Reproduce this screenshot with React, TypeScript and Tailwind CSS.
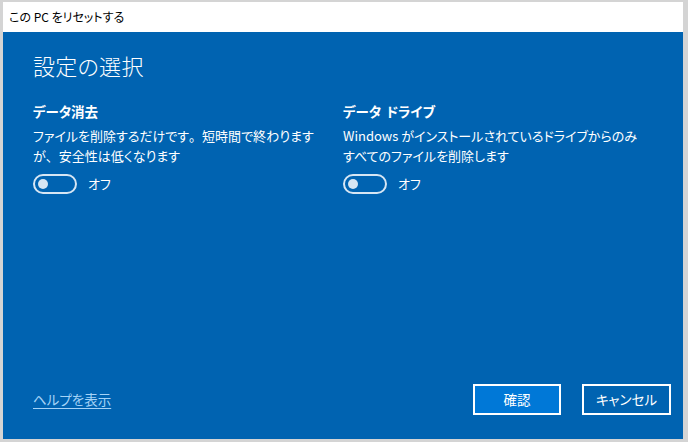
import React, { useState } from 'react';

const font = "[font-family:'Noto_Sans_CJK_JP','Noto_Sans',sans-serif] [font-feature-settings:'palt']";

interface ToggleProps {
  on: boolean;
  onChange: (v: boolean) => void;
}

const Toggle: React.FC<ToggleProps> = ({ on, onChange }) => (
  <div className="flex items-center gap-[11px]">
    <button
      onClick={() => onChange(!on)}
      className="flex h-[20px] w-[44px] items-center rounded-full border-2 border-[#d6e6f4] px-[3px]"
    >
      <span
        className={`block h-[10px] w-[10px] rounded-full bg-[#d6e6f4] ${on ? 'ml-auto' : ''}`}
      />
    </button>
    <span className="text-[13px] leading-[20px] text-white">{on ? 'オン' : 'オフ'}</span>
  </div>
);

const App: React.FC = () => {
  const [wipe, setWipe] = useState(false);
  const [drives, setDrives] = useState(false);

  return (
    <div className={`flex h-[442px] w-[688px] bg-[#d4d4d4] pb-[3px] pl-[3px] pr-[5px] pt-[2px] ${font}`}>
      <div className="flex flex-1 flex-col">
        <div className="flex h-[30px] items-center bg-white pl-[6px] text-[12px] text-black">
          この PC をリセットする
        </div>
        <div className="flex flex-1 flex-col bg-[#0063b1] pb-[24px] pl-[30px] pr-[12px] pt-[18px] text-white">
          <h1 className="text-[22px] font-light leading-[30px] tracking-[0.3px]">設定の選択</h1>

          <div className="mt-[21px] grid grid-cols-[310px_1fr]">
            <div>
              <h2 className="text-[13.5px] font-bold leading-[20px]">データ消去</h2>
              <p className="mt-[5px] text-[13px] leading-[20px]">
                ファイルを削除するだけです<span className="[font-feature-settings:normal]">。</span>短時間で終わります
                <br />
                が<span className="[font-feature-settings:normal]">、</span>安全性は低くなります
              </p>
              <div className="mt-[8px]">
                <Toggle on={wipe} onChange={setWipe} />
              </div>
            </div>
            <div>
              <h2 className="text-[13.5px] font-bold leading-[20px]">
                データ<span className="ml-[2px] [font-feature-settings:normal]">&nbsp;</span>ドライブ
              </h2>
              <p className="mt-[5px] text-[13px] leading-[20px]">
                Windows がインストールされているドライブからのみ
                <br />
                すべてのファイルを削除します
              </p>
              <div className="mt-[8px]">
                <Toggle on={drives} onChange={setDrives} />
              </div>
            </div>
          </div>

          <div className="mt-auto flex items-center">
            <a href="#" className="text-[13.5px] text-[#a5d3f7] underline underline-offset-[3px]">
              ヘルプを表示
            </a>
            <div className="ml-auto flex gap-[21px]">
              <button className="h-[31px] w-[88px] border-2 border-white bg-[#0078d7] text-[13.5px] text-white">
                確認
              </button>
              <button className="h-[31px] w-[89px] border-2 border-white bg-[#0063b1] text-[13.5px] text-white">
                キャンセル
              </button>
            </div>
          </div>
        </div>
      </div>
    </div>
  );
};

export default App;
